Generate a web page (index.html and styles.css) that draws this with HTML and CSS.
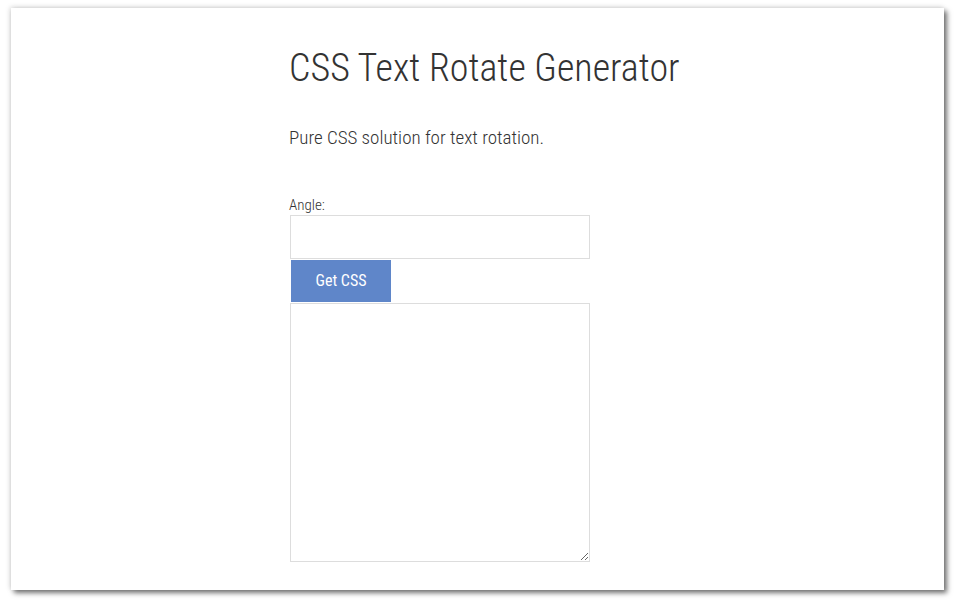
FILE: index.html
```html
<!DOCTYPE html>
<html lang="en">
  <head>
    <meta charset="UTF-8">
    <meta name="viewport" content="width=device-width, initial-scale=1.0">
    <title>CSS Text Rotate Generator</title>
    <link rel="stylesheet" href="styles.css">
  </head>
  <body>
    <div class="sheet">
      <main class="tool">
        <h1 class="title">CSS Text Rotate Generator</h1>
        <p class="lead">Pure CSS solution for text rotation.</p>
        <form class="rotate-form">
          <label class="field-label" for="angle">Angle:</label>
          <input id="angle" class="angle-input" type="text">
          <button type="button" class="get-button">Get CSS</button>
          <textarea class="css-output"></textarea>
        </form>
      </main>
    </div>
  </body>
</html>
```

FILE: styles.css
```css
:root {
  font-family: Roboto, "Liberation Sans", sans-serif;
  font-stretch: condensed;
  color: #333;
}

body {
  margin: 0;
  padding: 8px 10px 10px 11px;
  background-color: #fff;
}

.sheet {
  height: 582px;
  background-color: #fff;
  box-shadow: 3px 3px 5px rgba(0, 0, 0, .55), -1px -1px 5px rgba(0, 0, 0, .15);
}

.tool {
  padding: 38px 0 0 278px;
}

.title {
  margin: 0;
  font-size: 38px;
  font-weight: 300;
  line-height: 1.2;
}

.lead {
  margin: 34px 0 0;
  font-size: 19px;
  font-weight: 300;
}

.rotate-form {
  display: flex;
  flex-direction: column;
  align-items: flex-start;
  margin-top: 47px;
}

.field-label {
  margin-bottom: 1px;
  font-size: 15px;
  font-weight: 300;
  line-height: 18px;
}

.angle-input,
.css-output {
  box-sizing: border-box;
  width: 300px;
  margin: 0 0 0 1px;
  border: 1px solid #ddd;
  background: #fff;
  font: inherit;
}

.angle-input {
  height: 44px;
}

.get-button {
  width: 100px;
  height: 42px;
  margin: 1px 0 1px 2px;
  border: 0;
  background-color: #5f86c9;
  color: #fff;
  font: inherit;
  font-size: 16px;
}

.css-output {
  height: 259px;
  resize: both;
}
```
